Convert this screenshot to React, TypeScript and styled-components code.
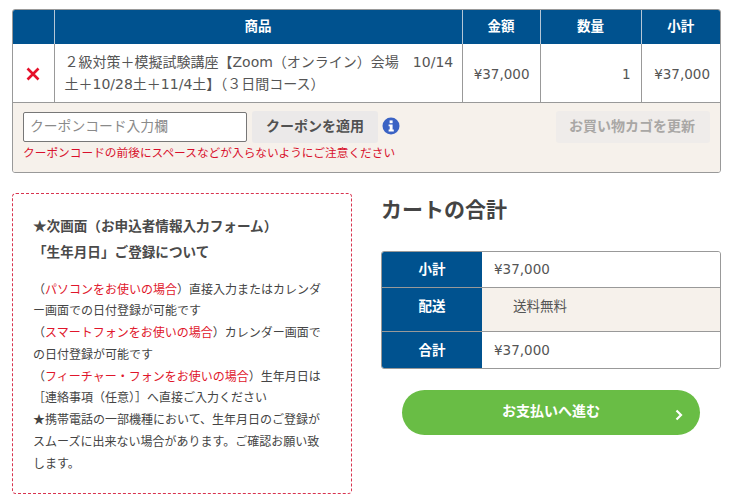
import styled, { createGlobalStyle } from "styled-components"

const GlobalStyle = createGlobalStyle`
    html, body {
        margin: 0;
        padding: 0;
        background: #fff;
    }
    body {
        font-family: "DejaVu Sans", "Noto Sans CJK JP", sans-serif;
        font-size: 14px;
        color: #555;
    }
`

const Page = styled.div`
    width: 740px;
    height: 495px;
    box-sizing: border-box;
    padding: 9px 19px 0 12px;
    overflow: hidden;
`

const CartPanel = styled.div`
    border: 1px solid #999;
    border-radius: 3px;
    overflow: hidden;
`

const CartTable = styled.table`
    width: 100%;
    table-layout: fixed;
    border-collapse: collapse;
`

const HeadCell = styled.th<{ $width?: number }>`
    width: ${(p) => (p.$width ? `${p.$width}px` : "auto")};
    height: 34px;
    padding: 0 0 4px;
    box-sizing: border-box;
    background: #00528f;
    color: #fff;
    font-size: 13.5px;
    font-weight: 700;
    text-align: center;
    border-left: 1px solid #b4c6d6;
    &:first-child {
        border-left: 0;
    }
`

const BodyCell = styled.td<{ $align?: string }>`
    height: 58px;
    padding: 2px 10px 0;
    box-sizing: border-box;
    text-align: ${(p) => p.$align || "left"};
    border-left: 1px solid #999;
    border-bottom: 1px solid #999;
    font-size: 13.5px;
    line-height: 22px;
    &:first-child {
        border-left: 0;
        padding: 3px 0 0;
    }
`

const ProductCell = styled(BodyCell)`
    padding: 1px 5px 0 10px;
    font-size: 14px;
`

const RemoveIcon = styled.svg`
    display: block;
    margin: 0 auto;
`

const CouponBar = styled.div`
    background: #f6f1eb;
    height: 69px;
    box-sizing: border-box;
    padding: 8px 10px 0;
    display: flex;
    justify-content: space-between;
`

const CouponRow = styled.div`
    display: flex;
    align-items: center;
`

const CouponInput = styled.input`
    width: 224px;
    height: 30px;
    box-sizing: border-box;
    border: 1px solid #777;
    border-radius: 2px;
    background: #fff;
    padding: 0 6px 2px;
    font: inherit;
    font-size: 13.8px;
    &::placeholder {
        color: #8a8a8a;
    }
`

const CouponButton = styled.button`
    width: 126px;
    height: 32px;
    margin-left: 5px;
    padding: 0 0 3px;
    border: 0;
    border-radius: 3px;
    background: #ebe9e9;
    color: #515151;
    font: inherit;
    font-size: 14px;
    font-weight: 700;
`

const InfoIcon = styled.svg`
    margin: -2px 0 0 4px;
`

const CouponNote = styled.div`
    margin-top: 1px;
    color: #d8102c;
    font-size: 11.7px;
    line-height: 18px;
    white-space: nowrap;
`

const UpdateButton = styled.button`
    width: 154px;
    height: 32px;
    padding: 0 2px 3px 0;
    border: 0;
    border-radius: 3px;
    background: #efecea;
    color: #a9a7a5;
    font: inherit;
    font-size: 14px;
    font-weight: 700;
`

const Columns = styled.div`
    display: flex;
    margin-top: 20px;
`

const NoticeBox = styled.div`
    width: 340px;
    height: 301px;
    box-sizing: border-box;
    border: 1px dashed #d8334f;
    border-radius: 4px;
    padding: 18px 20px 0;
    margin-right: 29px;
    flex-shrink: 0;
    font-family: "Noto Sans CJK JP", sans-serif;
`

const NoticeTitle = styled.div`
    font-weight: 700;
    font-size: 13.6px;
    line-height: 26px;
    color: #4a4a4a;
    white-space: nowrap;
`

const NoticeBody = styled.div`
    margin-top: 14px;
    font-size: 12px;
    line-height: 21.8px;
    color: #444;
    line-break: loose;
`

const Highlight = styled.span`
    color: #e0162b;
`

const Summary = styled.div`
    flex: 1;
`

const SummaryTitle = styled.h2`
    margin: 3px 0 27px;
    font-size: 21px;
    line-height: 28px;
    font-weight: 700;
    color: #444;
`

const SummaryPanel = styled.div`
    border: 1px solid #999;
    border-radius: 3px;
    overflow: hidden;
`

const SummaryRow = styled.div<{ $height: number; $tint?: boolean }>`
    display: flex;
    height: ${(p) => p.$height}px;
    background: ${(p) => (p.$tint ? "#f6f1eb" : "#fff")};
    border-top: 1px solid #999;
    &:first-child {
        border-top: 0;
    }
`

const SummaryLabel = styled.div<{ $top: number }>`
    width: 100px;
    padding-top: ${(p) => p.$top}px;
    box-sizing: border-box;
    background: #00528f;
    color: #fff;
    font-size: 13.5px;
    line-height: 20px;
    font-weight: 700;
    text-align: center;
`

const SummaryValue = styled.div<{ $indent?: boolean; $top: number }>`
    padding: ${(p) => p.$top}px 0 0 ${(p) => (p.$indent ? 31 : 12)}px;
    font-size: 13.5px;
    line-height: 20px;
`

const CheckoutButton = styled.a`
    position: relative;
    display: block;
    width: 298px;
    height: 45px;
    margin: 21px 0 0 21px;
    border-radius: 23px;
    background: #69bd45;
    color: #fff;
    font-size: 14px;
    font-weight: 700;
    line-height: 43px;
    text-align: center;
`

const CheckoutArrow = styled.svg`
    position: absolute;
    right: 17px;
    top: 19px;
`

export default function App() {
    return (
        <Page>
            <GlobalStyle />
            <CartPanel>
                <CartTable>
                    <thead>
                        <tr>
                            <HeadCell $width={41} />
                            <HeadCell>商品</HeadCell>
                            <HeadCell $width={78}>金額</HeadCell>
                            <HeadCell $width={101}>数量</HeadCell>
                            <HeadCell $width={79}>小計</HeadCell>
                        </tr>
                    </thead>
                    <tbody>
                        <tr>
                            <BodyCell>
                                <RemoveIcon width="14" height="14" viewBox="0 0 14 14">
                                    <path d="M1.5 1.5 12.5 12.5M12.5 1.5 1.5 12.5" stroke="#e5102a" strokeWidth="2.6" fill="none" />
                                </RemoveIcon>
                            </BodyCell>
                            <ProductCell>２級対策＋模擬試験講座【Zoom（オンライン）会場　10/14土＋10/28土＋11/4土】（３日間コース）</ProductCell>
                            <BodyCell $align="right">¥37,000</BodyCell>
                            <BodyCell $align="right">1</BodyCell>
                            <BodyCell $align="right">¥37,000</BodyCell>
                        </tr>
                    </tbody>
                </CartTable>
                <CouponBar>
                    <div>
                        <CouponRow>
                            <CouponInput placeholder="クーポンコード入力欄" />
                            <CouponButton>クーポンを適用</CouponButton>
                            <InfoIcon width="18" height="18" viewBox="0 0 18 18">
                                <circle cx="9" cy="9" r="8.5" fill="#3b63c4" />
                                <rect x="7.6" y="3.4" width="3" height="2.8" fill="#fff" />
                                <path d="M6.6 7.4h4v5.2h1.2v1.8H6.6v-1.8h1.1V9.2H6.6z" fill="#fff" />
                            </InfoIcon>
                        </CouponRow>
                        <CouponNote>クーポンコードの前後にスペースなどが入らないようにご注意ください</CouponNote>
                    </div>
                    <UpdateButton disabled>お買い物カゴを更新</UpdateButton>
                </CouponBar>
            </CartPanel>
            <Columns>
                <NoticeBox>
                    <NoticeTitle>★次画面（お申込者情報入力フォーム）</NoticeTitle>
                    <NoticeTitle>「生年月日」ご登録について</NoticeTitle>
                    <NoticeBody>
                        （<Highlight>パソコンをお使いの場合</Highlight>）直接入力またはカレンダー画面での日付登録が可能です<br />
                        （<Highlight>スマートフォンをお使いの場合</Highlight>）カレンダー画面での日付登録が可能です<br />
                        （<Highlight>フィーチャー・フォンをお使いの場合</Highlight>）生年月日は［連絡事項（任意）］へ直接ご入力ください<br />
                        ★携帯電話の一部機種において、生年月日のご登録がスムーズに出来ない場合があります。ご確認お願い致します。
                    </NoticeBody>
                </NoticeBox>
                <Summary>
                    <SummaryTitle>カートの合計</SummaryTitle>
                    <SummaryPanel>
                        <SummaryRow $height={35}>
                            <SummaryLabel $top={7}>小計</SummaryLabel>
                            <SummaryValue $top={7}>¥37,000</SummaryValue>
                        </SummaryRow>
                        <SummaryRow $height={43} $tint>
                            <SummaryLabel $top={8}>配送</SummaryLabel>
                            <SummaryValue $indent $top={8}>送料無料</SummaryValue>
                        </SummaryRow>
                        <SummaryRow $height={36}>
                            <SummaryLabel $top={8}>合計</SummaryLabel>
                            <SummaryValue $top={8}>¥37,000</SummaryValue>
                        </SummaryRow>
                    </SummaryPanel>
                    <CheckoutButton>
                        お支払いへ進む
                        <CheckoutArrow width="8" height="12" viewBox="0 0 8 12">
                            <path d="M1.5 1.5 6 6 1.5 10.5" stroke="#fff" strokeWidth="2.2" fill="none" />
                        </CheckoutArrow>
                    </CheckoutButton>
                </Summary>
            </Columns>
        </Page>
    )
}
